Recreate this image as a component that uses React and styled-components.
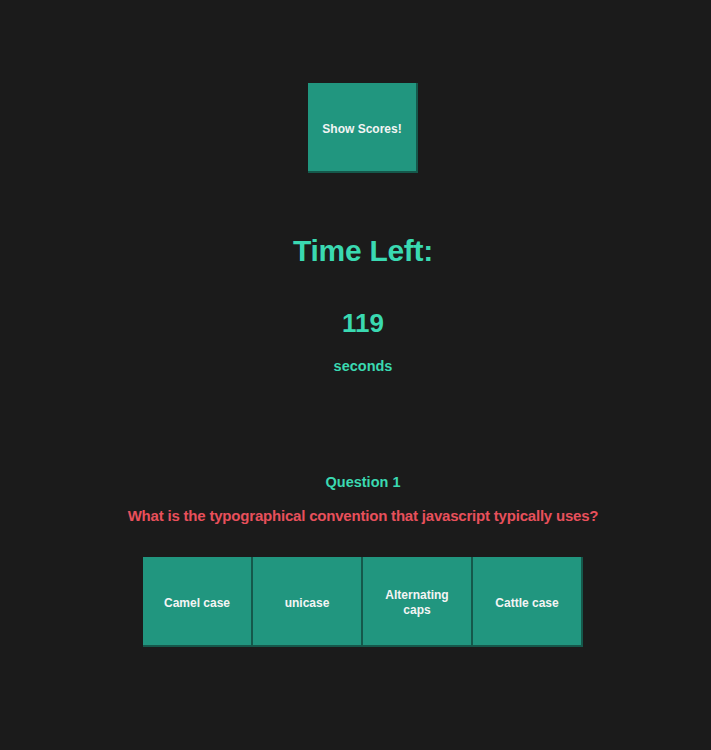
import React from "react";
import styled, { createGlobalStyle } from "styled-components";

const GlobalStyle = createGlobalStyle`
  body {
    margin: 0;
    background: #1b1b1b;
    font-family: "Liberation Sans", Arial, sans-serif;
  }
`;

const Page = styled.div`
  display: flex;
  flex-direction: column;
  align-items: center;
  padding: 83px 0 0 15px;
  min-height: 750px;
  box-sizing: border-box;
`;

const Tile = styled.button`
  width: 110px;
  height: 90px;
  padding: 4px 12px 0;
  background: #21967f;
  color: #f4f4f4;
  border: none;
  border-right: 2px solid #15584b;
  border-bottom: 2px solid #15584b;
  font-family: "Liberation Sans", Arial, sans-serif;
  font-weight: 700;
  font-size: 12px;
  line-height: 15px;
  cursor: pointer;
`;

const Heading = styled.h1`
  margin: 60px 0 0;
  color: #3ad9b1;
  font-size: 30px;
  line-height: 36px;
  font-weight: 700;
  letter-spacing: -0.3px;
`;

const Count = styled.div`
  margin-top: 39px;
  color: #3ad9b1;
  font-size: 26px;
  line-height: 30px;
  font-weight: 700;
`;

const Unit = styled.div`
  margin-top: 20px;
  color: #3ad9b1;
  font-size: 14.5px;
  line-height: 16px;
  font-weight: 700;
`;

const QuestionLabel = styled.div`
  margin-top: 100px;
  color: #3ad9b1;
  font-size: 14.5px;
  line-height: 16px;
  font-weight: 700;
`;

const QuestionText = styled.div`
  margin-top: 17px;
  color: #e8505b;
  font-size: 15px;
  line-height: 18px;
  font-weight: 700;
  letter-spacing: -0.2px;
`;

const Answers = styled.div`
  margin-top: 32px;
  display: flex;
`;

const answers = ["Camel case", "unicase", "Alternating caps", "Cattle case"];

export default function App() {
  return (
    <>
      <GlobalStyle />
      <Page>
        <Tile>Show Scores!</Tile>
        <Heading>Time Left:</Heading>
        <Count>119</Count>
        <Unit>seconds</Unit>
        <QuestionLabel>Question 1</QuestionLabel>
        <QuestionText>What is the typographical convention that javascript typically uses?</QuestionText>
        <Answers>
          {answers.map((a) => (
            <Tile key={a}>{a}</Tile>
          ))}
        </Answers>
      </Page>
    </>
  );
}
